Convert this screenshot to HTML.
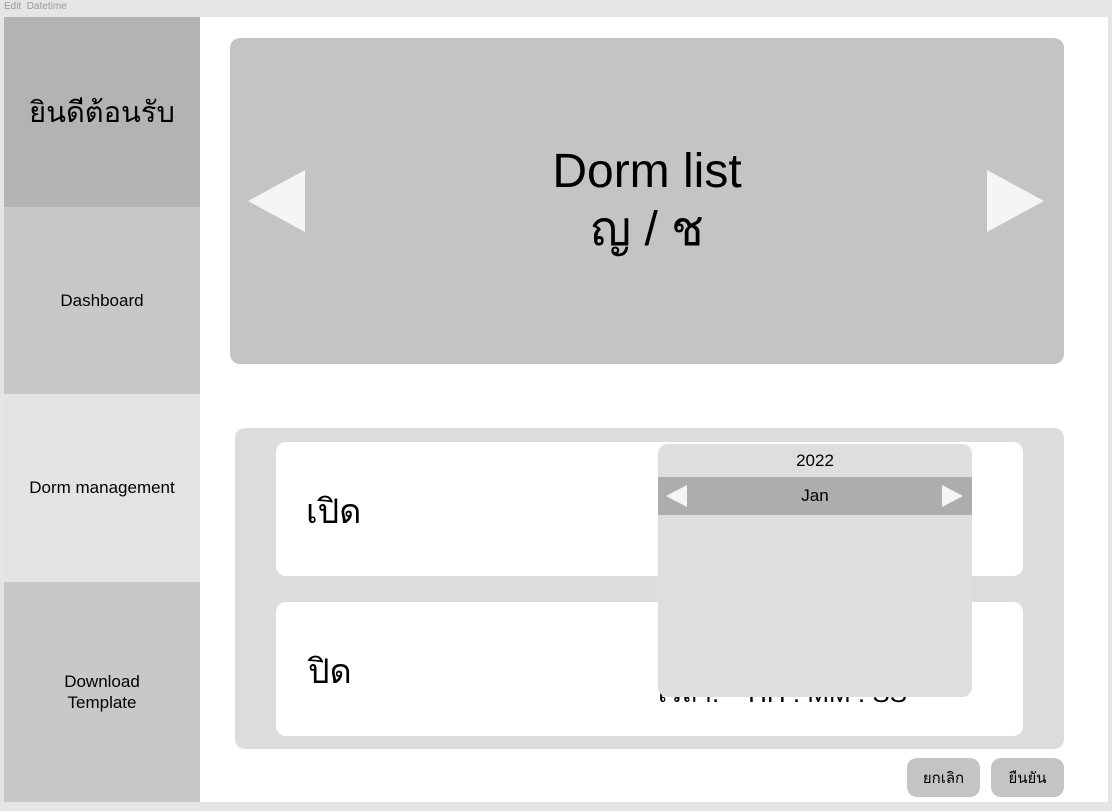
<!DOCTYPE html>
<html><head><meta charset="utf-8"><style>
*{margin:0;padding:0;box-sizing:border-box}
body{width:1112px;height:811px;background:#e5e5e5;position:relative;overflow:hidden;font-family:"Liberation Sans","Noto Sans CJK SC",sans-serif;color:#000}
.a{position:absolute}
.c{display:flex;align-items:center;justify-content:center;text-align:center}
.tri{width:0;height:0;position:absolute}
</style></head><body>
<div class="a" style="left:4px;top:1px;font-size:10px;color:#999">Edit&nbsp; Datetime</div>
<div class="a" style="left:4px;top:17px;width:1104px;height:785px;background:#fff"></div>
<div class="a c" style="left:4px;top:17px;width:196px;height:190px;background:#b3b3b3;font-size:29px">ยินดีต้อนรับ</div>
<div class="a c" style="left:4px;top:207px;width:196px;height:187px;background:#c8c8c8;font-size:17px">Dashboard</div>
<div class="a c" style="left:4px;top:394px;width:196px;height:188px;background:#e3e3e3;font-size:17px">Dorm management</div>
<div class="a c" style="left:4px;top:582px;width:196px;height:220px;background:#c8c8c8;font-size:17px;line-height:21px">Download<br>Template</div>
<div class="a c" style="left:230px;top:38px;width:834px;height:326px;background:#c4c4c4;border-radius:10px;font-size:48px;line-height:58px">Dorm list<br>ญ / ช</div>
<div class="tri" style="left:248px;top:170px;border-top:31px solid transparent;border-bottom:31px solid transparent;border-right:57px solid #f5f5f5"></div>
<div class="tri" style="left:987px;top:170px;border-top:31px solid transparent;border-bottom:31px solid transparent;border-left:57px solid #f5f5f5"></div>
<div class="a" style="left:235px;top:428px;width:829px;height:321px;background:#dcdcdc;border-radius:10px"></div>
<div class="a" style="left:276px;top:442px;width:747px;height:134px;background:#fff;border-radius:10px"></div>
<div class="a" style="left:306px;top:484px;font-size:34px">เปิด</div>
<div class="a" style="left:276px;top:602px;width:747px;height:134px;background:#fff;border-radius:10px"></div>
<div class="a" style="left:308px;top:644px;font-size:34px">ปิด</div>
<div class="a" style="left:658px;top:673px;font-size:26px;white-space:pre">เวลา:    HH : MM : SS</div>
<div class="a" style="left:658px;top:444px;width:314px;height:253px;background:#dedede;border-radius:10px;overflow:hidden">
<div class="a c" style="left:0;top:0;width:314px;height:33px;font-size:17px">2022</div>
<div class="a c" style="left:0;top:33px;width:314px;height:38px;background:#adadad;font-size:17px">Jan</div>
<div class="tri" style="left:8px;top:41px;border-top:11px solid transparent;border-bottom:11px solid transparent;border-right:21px solid #f5f5f5"></div>
<div class="tri" style="left:284px;top:41px;border-top:11px solid transparent;border-bottom:11px solid transparent;border-left:21px solid #f5f5f5"></div>
</div>
<div class="a c" style="left:907px;top:758px;width:73px;height:39px;background:#c4c4c4;border-radius:10px;font-size:15px">ยกเลิก</div>
<div class="a c" style="left:991px;top:758px;width:73px;height:39px;background:#c4c4c4;border-radius:10px;font-size:15px">ยืนยัน</div>
</body></html>
